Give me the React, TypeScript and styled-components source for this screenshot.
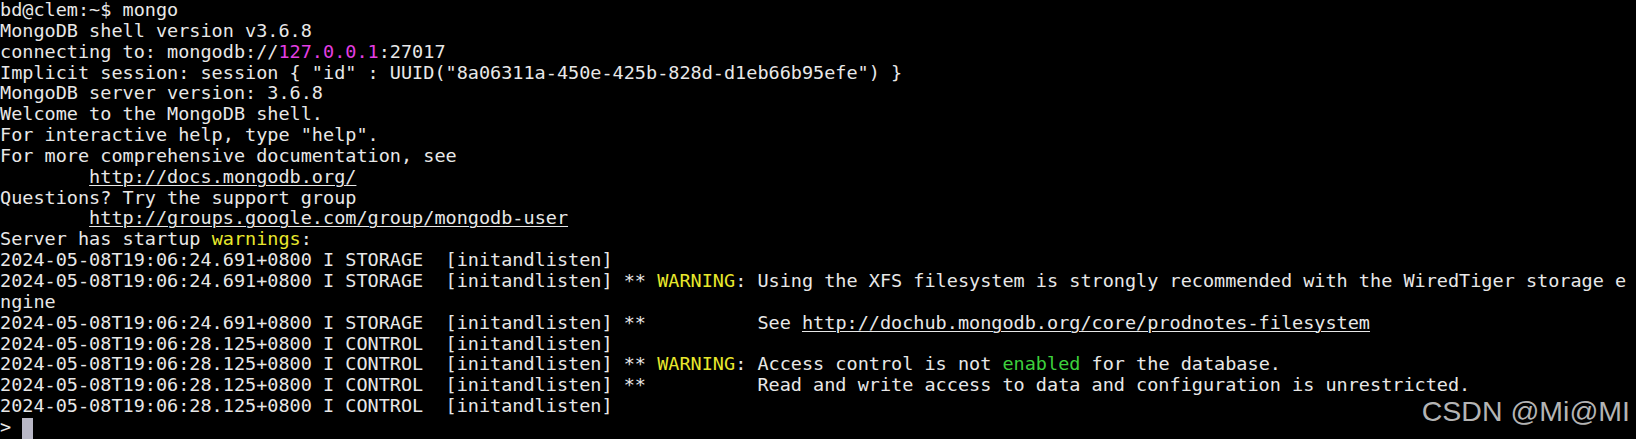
import React from "react";
import styled, { createGlobalStyle } from "styled-components";

const Global = createGlobalStyle`
  html, body { margin: 0; padding: 0; background: #000; }
  #root { width: 1636px; height: 439px; overflow: hidden; }
`;

const Terminal = styled.div`
  position: relative;
  width: 1636px;
  height: 439px;
  background: #000;
  color: #e8e8e8;
  font-family: "DejaVu Sans Mono", "Liberation Mono", monospace;
  font-size: 18.5px;
  line-height: 20.85px;
  overflow: hidden;
  display: flex;
  flex-direction: column;
`;

const Line = styled.div`
  white-space: pre;
  height: 20.85px;
  flex-shrink: 0;
`;

const Url = styled.span`
  text-decoration: underline;
  text-underline-offset: 2px;
  text-decoration-thickness: 1px;
`;

const Tone = styled.span<{ $c: "magenta" | "yellow" | "green" }>`
  color: ${(p) =>
    p.$c === "magenta" ? "#e33fe3" : p.$c === "yellow" ? "#e8e82c" : "#3dd13d"};
`;

const Cursor = styled.span`
  display: inline-block;
  width: 11px;
  height: 21px;
  background: #b9b8c6;
  vertical-align: top;
  margin-top: 1px;
`;

const Watermark = styled.div`
  position: absolute;
  right: 6px;
  top: 396px;
  font-family: "Liberation Sans", Arial, sans-serif;
  font-size: 28.5px;
  line-height: 30px;
  color: #b4b4b4;
  white-space: pre;
`;

const TS1 = "2024-05-08T19:06:24.691+0800 I STORAGE  [initandlisten]";
const TS2 = "2024-05-08T19:06:28.125+0800 I CONTROL  [initandlisten]";

export default function App() {
  return (
    <>
      <Global />
      <Terminal>
        <Line>bd@clem:~$ mongo</Line>
        <Line>MongoDB shell version v3.6.8</Line>
        <Line>
          connecting to: mongodb://<Tone $c="magenta">127.0.0.1</Tone>:27017
        </Line>
        <Line>
          {'Implicit session: session { "id" : UUID("8a06311a-450e-425b-828d-d1eb66b95efe") }'}
        </Line>
        <Line>MongoDB server version: 3.6.8</Line>
        <Line>Welcome to the MongoDB shell.</Line>
        <Line>For interactive help, type "help".</Line>
        <Line>For more comprehensive documentation, see</Line>
        <Line>
          {"        "}
          <Url>http://docs.mongodb.org/</Url>
        </Line>
        <Line>Questions? Try the support group</Line>
        <Line>
          {"        "}
          <Url>http://groups.google.com/group/mongodb-user</Url>
        </Line>
        <Line>
          Server has startup <Tone $c="yellow">warnings</Tone>:
        </Line>
        <Line>{TS1}</Line>
        <Line>
          {TS1} ** <Tone $c="yellow">WARNING</Tone>: Using the XFS filesystem is strongly
          recommended with the WiredTiger storage e
        </Line>
        <Line>ngine</Line>
        <Line>
          {TS1} **{"          "}See{" "}
          <Url>http://dochub.mongodb.org/core/prodnotes-filesystem</Url>
        </Line>
        <Line>{TS2}</Line>
        <Line>
          {TS2} ** <Tone $c="yellow">WARNING</Tone>: Access control is not{" "}
          <Tone $c="green">enabled</Tone> for the database.
        </Line>
        <Line>
          {TS2} **{"          "}Read and write access to data and configuration is
          unrestricted.
        </Line>
        <Line>{TS2}</Line>
        <Line>
          {"> "}
          <Cursor />
        </Line>
        <Watermark>CSDN @Mi@MI</Watermark>
      </Terminal>
    </>
  );
}
